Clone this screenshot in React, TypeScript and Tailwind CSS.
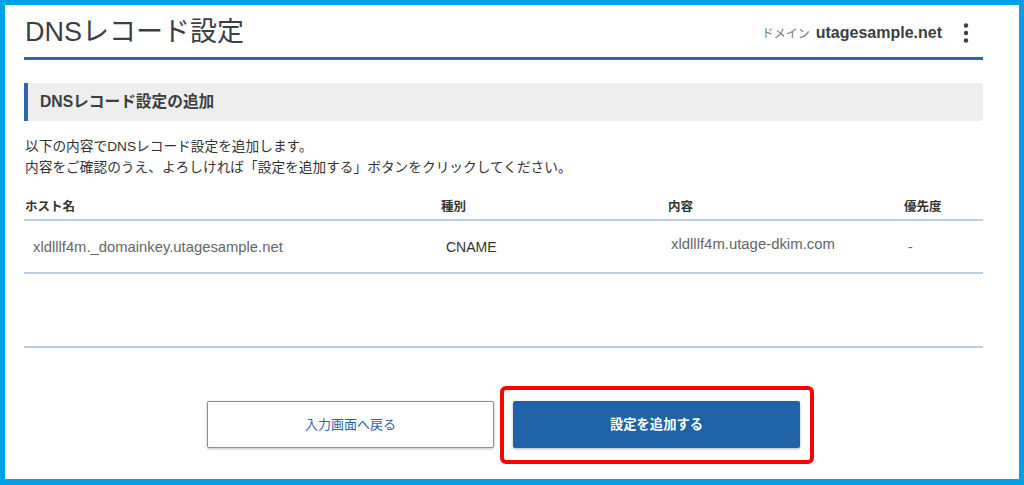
import React from "react";

const font = { fontFamily: '"Liberation Sans", "Noto Sans CJK JP", sans-serif' };

export default function App() {
  return (
    <div className="w-full h-[485px] bg-[#00a0e9] pt-[5px] pl-[5px] pr-[5px] pb-[6px]" style={font}>
      <div className="h-full bg-white pl-[19px] pr-[36px] flex flex-col">
        {/* Header */}
        <div className="h-[55px] border-b-[3px] border-[#2a66a8] flex items-center justify-between">
          <h1 className="text-[27px] leading-none text-[#3a3f44] pl-[1px] pt-[3px]">DNSレコード設定</h1>
          <div className="flex items-center pt-[4px]">
            <span className="text-[12px] text-[#777] mr-[6px] pt-[2px]">ドメイン</span>
            <span className="text-[16px] font-bold text-[#3a3f44]">utagesample.net</span>
            <svg width="24" height="24" viewBox="0 0 24 24" className="ml-[12px] mr-[5px]">
              <circle cx="12" cy="4.5" r="2.2" fill="#3a3f44" />
              <circle cx="12" cy="12" r="2.2" fill="#3a3f44" />
              <circle cx="12" cy="19.5" r="2.2" fill="#3a3f44" />
            </svg>
          </div>
        </div>

        {/* Section header */}
        <div className="mt-[23px] h-[38px] bg-[#eeeeee] border-l-4 border-[#2a66a8] rounded-r-[3px] flex items-center pl-[12px]">
          <span className="text-[15.7px] font-bold text-[#3a3f44]">DNSレコード設定の追加</span>
        </div>

        {/* Description */}
        <div className="mt-[15px] text-[13.7px] leading-[21px] text-[#333] pl-[1px]">
          <p>以下の内容でDNSレコード設定を追加します。</p>
          <p>内容をご確認のうえ、よろしければ「設定を追加する」ボタンをクリックしてください。</p>
        </div>

        {/* Table */}
        <div className="mt-[20px]">
          <div className="grid grid-cols-[417px_227px_236px_1fr] border-b-2 border-[#b9cde3] pb-[3px] text-[12.5px] leading-[18px] font-bold text-[#333]">
            <div className="pl-[1px]">ホスト名</div>
            <div>種別</div>
            <div>内容</div>
            <div>優先度</div>
          </div>
          <div className="grid grid-cols-[417px_227px_236px_1fr] border-b-2 border-[#b9cde3] h-[53px] items-center text-[14px] text-[#666]">
            <div className="pl-[9px] pt-[1px] text-[14.8px]">xldlllf4m._domainkey.utagesample.net</div>
            <div className="pl-[5px] pt-[1px] text-[#333]">CNAME</div>
            <div className="pl-[3px] pb-[5px] text-[14.9px]">xldlllf4m.utage-dkim.com</div>
            <div className="pl-[4px] pt-[1px]">-</div>
          </div>
          <div className="h-[74px] border-b-2 border-[#b9cde3]" />
        </div>

        {/* Buttons */}
        <div className="mt-[53px] flex justify-center gap-[19px]">
          <button className="w-[287px] h-[47px] bg-white border border-[#6b95c8] rounded-[2px] shadow-[0_1px_3px_rgba(0,0,0,0.25)] text-[13px] text-[#2a64a6]">
            入力画面へ戻る
          </button>
          <div className="relative">
            <button className="w-[287px] h-[47px] bg-[#1f62a5] rounded-[2px] shadow-[0_1px_3px_rgba(0,0,0,0.3)] text-[13.3px] font-bold text-white">
              設定を追加する
            </button>
            <div className="absolute left-[-13px] right-[-14px] top-[-15px] bottom-[-16px] border-4 border-[#ff0000] rounded-[6px] pointer-events-none" />
          </div>
        </div>
      </div>
    </div>
  );
}
